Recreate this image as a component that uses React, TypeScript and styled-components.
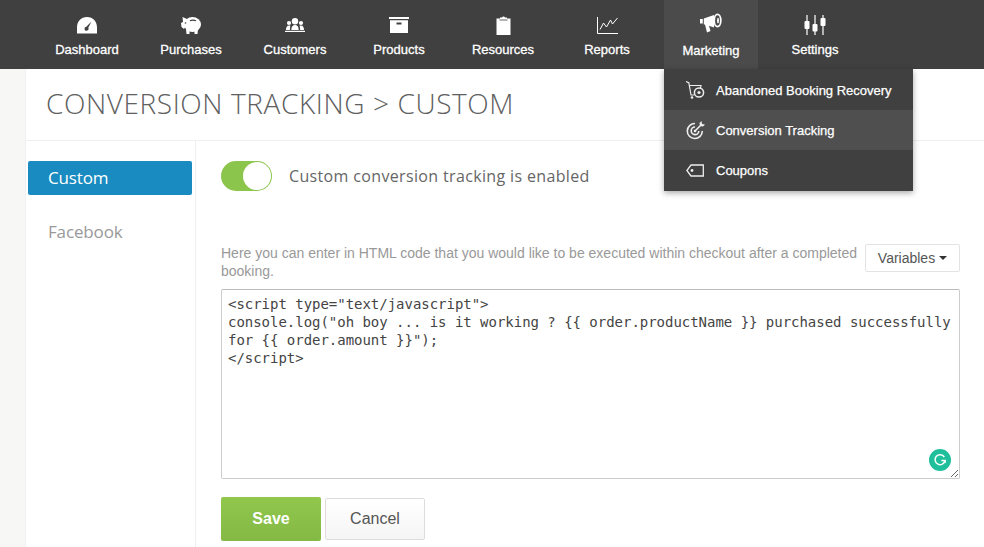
import styled, { createGlobalStyle } from 'styled-components';

const GlobalStyle = createGlobalStyle`
  html, body {
    margin: 0;
    height: 547px;
    overflow: hidden;
    background: #f7f7f6;
    font-family: 'Liberation Sans', Arial, sans-serif;
  }
  * { box-sizing: border-box; }
`;

const DashboardIcon = () => (
  <svg width="22" height="17" viewBox="0 0 22 17">
    <path fill="#fff" fillRule="evenodd" d="M11 0C5 0 1 4.500 1 10.500V16.500H21V10.500C21 4.500 17 0 11 0ZM15.500 4.500 12.300 10.800A2 2 0 1 1 10.300 9.700Z" />
  </svg>
);

const PurchasesIcon = () => (
  <svg width="22" height="18" viewBox="0 0 22 18">
    <ellipse cx="12.500" cy="8.500" rx="8.500" ry="7.500" fill="#fff" />
    <path fill="#fff" d="M1 7 3 6 2.500 1 7 3 9 5 4 13 1.500 11ZM6 13H9.500V18H6.500ZM14.500 13H18L17.500 18H14.500Z" />
    <path fill="none" stroke="#3f3f3f" strokeWidth="1.100" d="M10 4.700C12 3.900 14 3.900 16 4.700" />
    <circle cx="5.500" cy="7" r="0.800" fill="#3f3f3f" />
  </svg>
);

const CustomersIcon = () => (
  <svg width="20" height="14" viewBox="0 0 20 14">
    <g fill="#fff">
      <circle cx="10" cy="3.200" r="3.200" />
      <path d="M6.300 12c0-3.500 1.500-5 3.700-5s3.700 1.500 3.700 5z" />
      <circle cx="4" cy="5" r="2.100" />
      <circle cx="16" cy="5" r="2.100" />
      <path d="M1 12c0-3 1-4.500 3.200-4.500.5 0 .9.100 1.200.3C5 9 4.900 10.500 4.900 12zM19 12c0-3-1-4.500-3.200-4.500-.5 0-.9.100-1.200.3.400 1.200.5 2.700.5 4.200z" />
      <rect x="0" y="12.800" width="20" height="1.200" />
    </g>
  </svg>
);

const ProductsIcon = () => (
  <svg width="20" height="16" viewBox="0 0 20 16">
    <path fill="#fff" fillRule="evenodd" d="M0 0H20V2H0ZM1 3.300H19V16H1ZM7.500 5.500V7.500H12.500V5.500Z" />
  </svg>
);

const ResourcesIcon = () => (
  <svg width="15" height="19" viewBox="0 0 15 19">
    <path fill="#fff" d="M.5 2.500H4V1.500H6A1.600 1.600 0 0 1 9 1.500H11V2.500H14.500V19H.5Z" />
    <path fill="none" stroke="#3f3f3f" strokeWidth="0.800" d="M3.500 4H11.500" />
  </svg>
);

const ReportsIcon = () => (
  <svg width="21" height="17" viewBox="0 0 21 17">
    <path fill="none" stroke="#fff" strokeWidth="1" d="M.5 0V16.500H21" />
    <path fill="none" stroke="#fff" strokeWidth="1" d="M3 12.500 6.500 6 9.500 10 13.500 3 15.500 7 20.500 1" />
  </svg>
);

const MarketingIcon = () => (
  <svg width="22" height="24" viewBox="0 0 22 24">
    <path fill="#fff" d="M0 6H2.800V10.500H0ZM3.800 5.500 14 2V14.500L9 12.800 10.500 18 7 19.500 5 11.500H3.800Z" />
    <ellipse cx="17.500" cy="7.500" rx="4.200" ry="7" fill="#fff" />
    <ellipse cx="17.500" cy="7.500" rx="2.400" ry="5.200" fill="#4b4b4b" />
    <ellipse cx="18" cy="7.500" rx="1" ry="2.800" fill="#fff" />
  </svg>
);

const SettingsIcon = () => (
  <svg width="22" height="20" viewBox="0 0 22 20">
    <g fill="#fff">
      <rect x="2.400" y="0" width="1.200" height="20" />
      <rect x="10.400" y="0" width="1.200" height="20" />
      <rect x="18.400" y="0" width="1.200" height="20" />
      <rect x="0.500" y="6" width="5" height="8" rx="1" />
      <rect x="8.500" y="9" width="5" height="7.500" rx="1" />
      <rect x="16.500" y="3" width="5" height="8" rx="1" />
    </g>
  </svg>
);

const CartIcon = () => (
  <svg width="19" height="18" viewBox="0 0 19 18">
    <g fill="none" stroke="#eee" strokeWidth="1.200">
      <path d="M0 .6 2.800 1.600 5 14H8" />
      <path d="M3.500 4.500H15L14.500 7" />
      <circle cx="13" cy="11.500" r="4.600" strokeWidth="1.500" />
    </g>
    <circle cx="13" cy="11.500" r="1.600" fill="#eee" />
    <circle cx="6" cy="16.500" r="1.300" fill="#eee" />
  </svg>
);

const TargetIcon = () => (
  <svg width="19" height="19" viewBox="0 0 19 19">
    <g fill="none" stroke="#eee" strokeWidth="1.600">
      <path d="M9 2.500A7.500 7.500 0 1 0 16.300 10" />
      <path d="M9 6A3.800 3.800 0 1 0 12.800 10" />
      <path d="M9 10 15 4" />
    </g>
    <path fill="#eee" d="M13.500 2 15.500 0 16 3 19 3.500 17 5.500 14 5Z" />
    <circle cx="9" cy="10" r="1.300" fill="#eee" />
  </svg>
);

const CouponIcon = () => (
  <svg width="18" height="13" viewBox="0 0 18 13">
    <path fill="none" stroke="#eee" strokeWidth="1.300" d="M17.300 1H5L.9 6.500 5 12H17.300Z" />
    <circle cx="6" cy="6.500" r="1.400" fill="#eee" />
  </svg>
);

const navItems = [
  { label: 'Dashboard', icon: <DashboardIcon /> },
  { label: 'Purchases', icon: <PurchasesIcon /> },
  { label: 'Customers', icon: <CustomersIcon /> },
  { label: 'Products', icon: <ProductsIcon /> },
  { label: 'Resources', icon: <ResourcesIcon /> },
  { label: 'Reports', icon: <ReportsIcon /> },
  { label: 'Marketing', icon: <MarketingIcon />, active: true },
  { label: 'Settings', icon: <SettingsIcon /> },
];

const menuItems = [
  { label: 'Abandoned Booking Recovery', icon: <CartIcon /> },
  { label: 'Conversion Tracking', icon: <TargetIcon />, active: true },
  { label: 'Coupons', icon: <CouponIcon /> },
];

export default function App() {
  return (
    <>
      <GlobalStyle />
      <NavBar>
        {navItems.map((item) => (
          <NavItem key={item.label} $active={!!item.active}>
            <NavIcon>{item.icon}</NavIcon>
            <NavLabel $active={!!item.active}>{item.label}</NavLabel>
            {item.active && (
              <Dropdown>
                {menuItems.map((menuItem) => (
                  <MenuRow key={menuItem.label} $active={!!menuItem.active}>
                    <MenuIcon>{menuItem.icon}</MenuIcon>
                    {menuItem.label}
                  </MenuRow>
                ))}
              </Dropdown>
            )}
          </NavItem>
        ))}
      </NavBar>
      <Page>
        <Header>
          <Title>CONVERSION TRACKING &gt; CUSTOM</Title>
        </Header>
        <Body>
          <Sidebar>
            <SideLink $active>Custom</SideLink>
            <SideLink>Facebook</SideLink>
          </Sidebar>
          <Main>
            <ToggleRow>
              <Toggle>
                <Knob />
              </Toggle>
              <ToggleLabel>Custom conversion tracking is enabled</ToggleLabel>
            </ToggleRow>
            <HelpRow>
              <HelpText>
                Here you can enter in HTML code that you would like to be executed within checkout after a completed
                booking.
              </HelpText>
              <VariablesButton>
                Variables
                <Caret />
              </VariablesButton>
            </HelpRow>
            <EditorWrap>
              <CodeArea
                spellCheck={false}
                readOnly
                value={
                  '<script type="text/javascript">\nconsole.log("oh boy ... is it working ? {{ order.productName }} purchased successfully for {{ order.amount }}");\n</script>'
                }
              />
              <GrammarlyBadge>
                <svg width="14" height="14" viewBox="0 0 14 14">
                  <path fill="none" stroke="#fff" strokeWidth="1.500" d="M11.300 4A5 5 0 1 0 12 7.500H8.300" />
                  <path fill="#fff" d="M11 7.500H13V10.500Z" />
                </svg>
              </GrammarlyBadge>
            </EditorWrap>
            <Actions>
              <SaveButton>Save</SaveButton>
              <CancelButton>Cancel</CancelButton>
            </Actions>
          </Main>
        </Body>
      </Page>
    </>
  );
}

const NavBar = styled.nav`
  display: flex;
  gap: 10px;
  height: 69px;
  padding-left: 40px;
  background: #404040;
`;

const NavItem = styled.div<{ $active: boolean }>`
  position: relative;
  display: flex;
  flex-direction: column;
  align-items: center;
  width: 94px;
  height: 69px;
  background: ${({ $active }) => ($active ? '#4b4b4b' : 'transparent')};
`;

const NavIcon = styled.div`
  display: flex;
  justify-content: center;
  align-items: center;
  height: 35px;
  margin-bottom: 7px;
  padding-top: 15px;
`;

const NavLabel = styled.span<{ $active: boolean }>`
  margin-top: ${({ $active }) => ($active ? '1px' : '0')};
  color: #fff;
  font-size: 13px;
  font-weight: 400;
  line-height: 16px;
  -webkit-text-stroke: 0.3px #fff;
`;

const Dropdown = styled.div`
  position: absolute;
  top: 69px;
  left: 0;
  z-index: 5;
  width: 249px;
  height: 122px;
  padding: 1px 0;
  background: #404040;
  box-shadow: 0 2px 6px rgba(0, 0, 0, 0.35);
`;

const MenuRow = styled.div<{ $active: boolean }>`
  display: flex;
  align-items: center;
  height: 40px;
  padding-left: 20px;
  background: ${({ $active }) => ($active ? '#4f4f4f' : 'transparent')};
  color: #fff;
  font-size: 13px;
  -webkit-text-stroke: 0.25px #fff;
`;

const MenuIcon = styled.span`
  display: flex;
  justify-content: center;
  width: 22px;
  margin-right: 10px;
`;

const Page = styled.div`
  height: 478px;
  margin-left: 25px;
  background: #fff;
  border-left: 1px solid #f0f0f0;
`;

const Header = styled.header`
  display: flex;
  align-items: center;
  height: 72px;
  padding: 0 0 3px 20px;
  border-bottom: 1px solid #efefef;
`;

const Title = styled.h1`
  margin: 0;
  color: #606060;
  font-family: 'Open Sans', sans-serif;
  font-size: 28px;
  font-weight: 300;
  letter-spacing: 0.6px;
  line-height: 36px;
`;

const Body = styled.div`
  display: flex;
  height: 406px;
`;

const Sidebar = styled.aside`
  display: flex;
  flex-direction: column;
  gap: 20px;
  width: 170px;
  padding: 20px 3px 0 2px;
  border-right: 1px solid #efefef;
`;

const SideLink = styled.div<{ $active?: boolean }>`
  height: 34px;
  padding-left: 20px;
  border-radius: 2px;
  background: ${({ $active }) => ($active ? '#1a8bc0' : 'transparent')};
  color: ${({ $active }) => ($active ? '#fff' : '#999')};
  font-family: 'Open Sans', sans-serif;
  font-size: 17px;
  letter-spacing: -0.15px;
  line-height: 34px;
`;

const Main = styled.main`
  flex: 1;
  padding: 20px 24px 0 25px;
`;

const ToggleRow = styled.div`
  display: flex;
  align-items: center;
  gap: 17px;
  height: 30px;
`;

const Toggle = styled.div`
  display: flex;
  justify-content: flex-end;
  width: 51px;
  height: 30px;
  padding: 1px;
  border-radius: 15px;
  background: #8cc54b;
`;

const Knob = styled.div`
  width: 28px;
  height: 28px;
  border-radius: 50%;
  background: #fff;
`;

const ToggleLabel = styled.span`
  margin-top: -1px;
  color: #666;
  font-family: 'Open Sans', sans-serif;
  font-size: 16px;
  letter-spacing: 0.35px;
  line-height: 30px;
`;

const HelpRow = styled.div`
  display: flex;
  gap: 6px;
  align-items: flex-start;
  margin-top: 53px;
`;

const HelpText = styled.p`
  width: 638px;
  margin: 0;
  color: #999;
  font-size: 14px;
  line-height: 18px;
`;

const VariablesButton = styled.button`
  display: flex;
  align-items: center;
  justify-content: center;
  gap: 4px;
  width: 95px;
  height: 28px;
  padding: 0;
  border: 1px solid #e3e3e3;
  border-radius: 2px;
  background: #fff;
  color: #555;
  font-family: 'Liberation Sans', Arial, sans-serif;
  font-size: 14px;
`;

const Caret = styled.span`
  width: 0;
  height: 0;
  border-top: 4px solid #333;
  border-right: 4px solid transparent;
  border-left: 4px solid transparent;
`;

const EditorWrap = styled.div`
  position: relative;
  margin-top: 9px;
  height: 190px;
`;

const CodeArea = styled.textarea`
  display: block;
  width: 100%;
  height: 100%;
  padding: 5px 6px;
  border: 1px solid #ccc;
  border-top-color: #bbb;
  border-radius: 2px;
  outline: none;
  color: #444;
  font-family: 'DejaVu Sans Mono', monospace;
  font-size: 14px;
  letter-spacing: -0.025px;
  line-height: 18px;
  resize: both;
  overflow: hidden;
`;

const GrammarlyBadge = styled.div`
  position: absolute;
  right: 9px;
  bottom: 8px;
  display: flex;
  align-items: center;
  justify-content: center;
  width: 22px;
  height: 22px;
  border-radius: 50%;
  background: #1fbf9b;
`;

const Actions = styled.div`
  display: flex;
  align-items: center;
  gap: 4px;
  margin-top: 18px;
`;

const SaveButton = styled.button`
  width: 100px;
  height: 44px;
  border: none;
  border-radius: 2px;
  background: linear-gradient(#90c74c, #84b945);
  color: #fff;
  font-family: 'Liberation Sans', Arial, sans-serif;
  font-size: 16px;
  font-weight: 700;
`;

const CancelButton = styled.button`
  width: 100px;
  height: 42px;
  border: 1px solid #ddd;
  border-radius: 2px;
  background: linear-gradient(#fff, #f5f5f5);
  color: #555;
  font-family: 'Liberation Sans', Arial, sans-serif;
  font-size: 16px;
`;
